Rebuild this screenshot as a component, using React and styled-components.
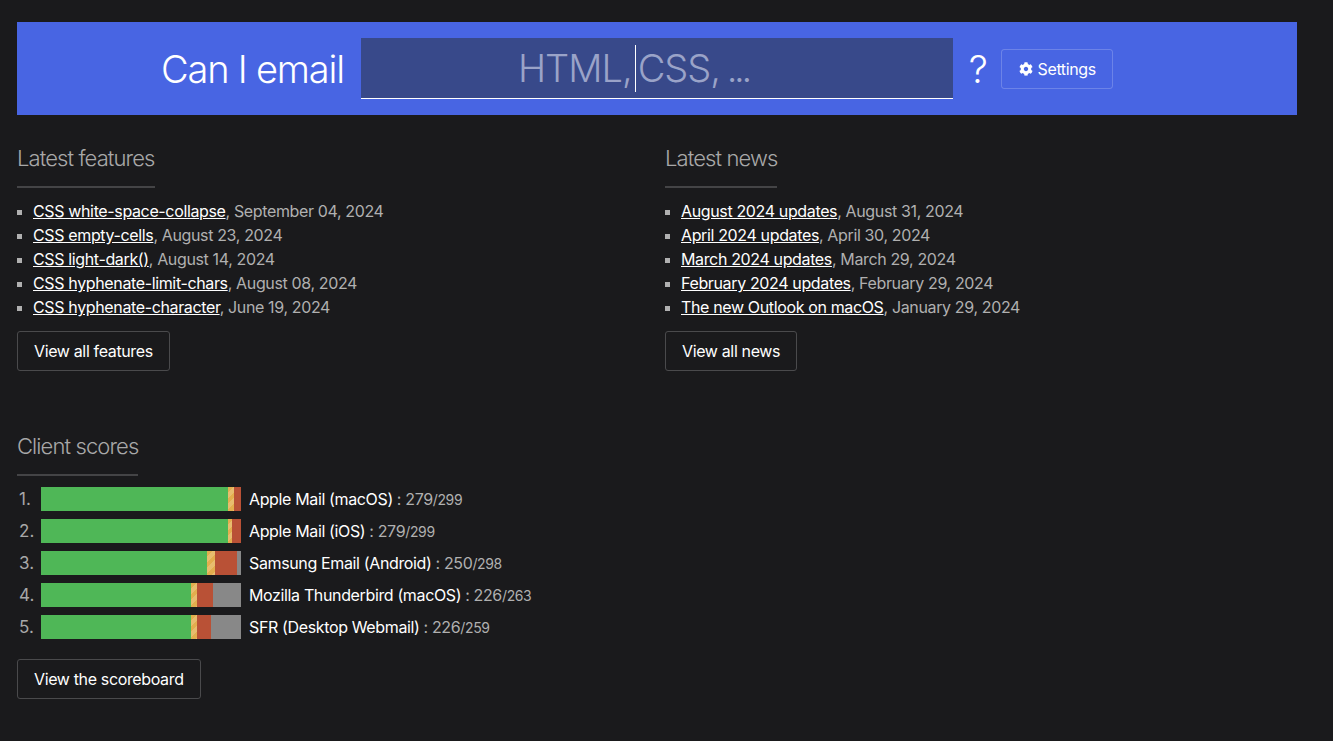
import React from 'react';
import styled, { createGlobalStyle } from 'styled-components';
import { FaCog } from 'react-icons/fa';

const features = [
  ['CSS white-space-collapse', 'September 04, 2024'],
  ['CSS empty-cells', 'August 23, 2024'],
  ['CSS light-dark()', 'August 14, 2024'],
  ['CSS hyphenate-limit-chars', 'August 08, 2024'],
  ['CSS hyphenate-character', 'June 19, 2024'],
];

const news = [
  ['August 2024 updates', 'August 31, 2024'],
  ['April 2024 updates', 'April 30, 2024'],
  ['March 2024 updates', 'March 29, 2024'],
  ['February 2024 updates', 'February 29, 2024'],
  ['The new Outlook on macOS', 'January 29, 2024'],
];

const scores = [
  { name: 'Apple Mail (macOS)', score: 279, total: 299, parts: [187, 6, 7, 0] },
  { name: 'Apple Mail (iOS)', score: 279, total: 299, parts: [187, 4, 9, 0] },
  { name: 'Samsung Email (Android)', score: 250, total: 298, parts: [166, 8, 22, 4] },
  { name: 'Mozilla Thunderbird (macOS)', score: 226, total: 263, parts: [150, 6, 16, 28] },
  { name: 'SFR (Desktop Webmail)', score: 226, total: 259, parts: [150, 6, 14, 30] },
];

const GlobalStyle = createGlobalStyle`
  html, body {
    margin: 0;
    background: #1a1a1c;
  }
  body {
    font-family: Inter, "Liberation Sans", sans-serif;
    font-size: 16px;
    line-height: 24px;
    letter-spacing: -0.36px;
    color: #b0b0b0;
  }
`;

const Page = styled.div`
  width: 1280px;
  padding: 22px 0 42px 17px;
`;

const Header = styled.header`
  display: flex;
  align-items: center;
  height: 93px;
  padding-left: 144px;
  box-sizing: border-box;
  background: #4865e3;
  color: #fff;
`;

const Title = styled.h1`
  margin: 0 17px 0 0;
  font-size: 38px;
  line-height: 46px;
  font-weight: 350;
  letter-spacing: -1.2px;
  white-space: nowrap;
`;

const SearchBox = styled.div`
  display: flex;
  align-items: center;
  justify-content: center;
  width: 592px;
  height: 61px;
  padding-right: 47px;
  box-sizing: border-box;
  background: #38498a;
  border-bottom: 1px solid #fff;
  color: #9aa3c8;
  font-size: 38px;
  font-weight: 300;
  letter-spacing: -1px;
  white-space: nowrap;
`;

const Caret = styled.span`
  width: 1px;
  height: 47px;
  margin: 0 2px 0 3px;
  background: #fff;
`;

const Placeholder = styled.span`
  font-feature-settings: 'calt' 0;
  word-spacing: -3px;
`;

const Dots = styled.span`
  letter-spacing: -3.4px;
`;

const Help = styled.span`
  margin: 0 13px 0 16px;
  font-size: 38px;
  line-height: 46px;
  font-weight: 350;
`;

const Button = styled.a`
  display: inline-flex;
  align-items: center;
  gap: 5px;
  height: 40px;
  padding: 0 16px;
  box-sizing: border-box;
  border: 1px solid #4a4a4c;
  border-radius: 3px;
  color: #fff;
  font-size: 16px;
  white-space: nowrap;
`;

const SettingsButton = styled(Button)`
  padding: 0 16px 0 17px;
  border-color: rgba(255, 255, 255, 0.2);
`;

const Columns = styled.div`
  display: grid;
  grid-template-columns: 632px 632px;
  gap: 16px;
  margin-top: 28px;
`;

const Section = styled.section`
  margin-top: ${(p) => p.$top || 0}px;
`;

const Heading = styled.h2`
  display: table;
  margin: 0 0 11px;
  padding-bottom: 13px;
  border-bottom: 2px solid #444446;
  color: #a8a8a8;
  font-size: 22px;
  line-height: 30px;
  font-weight: 300;
  letter-spacing: -0.9px;
`;

const List = styled.ul`
  margin: 0 0 12px;
  padding-left: 16px;
  list-style: square;

  li::marker {
    font-size: 14px;
  }
`;

const ItemLink = styled.a`
  color: #fff;
  text-decoration: underline;
`;

const ScoreList = styled.ol`
  display: flex;
  flex-direction: column;
  gap: 8px;
  margin: 0 0 20px;
  padding: 0;
  list-style: none;
`;

const ScoreRow = styled.li`
  display: flex;
  align-items: center;
  height: 24px;
`;

const Rank = styled.span`
  width: 24px;
  padding-left: 2px;
  box-sizing: border-box;
  color: #a8a8a8;
  font-size: 17px;
  letter-spacing: 0;
`;

const Bar = styled.div`
  display: flex;
  flex: none;
  width: 200px;
  height: 24px;
  margin-right: 8px;
`;

const segmentColors = ['#4fb757', '#e3ae4e', '#b95136', '#888888'];

const Segment = styled.span`
  height: 100%;
  background-color: ${(p) => segmentColors[p.$kind]};
  ${(p) =>
    p.$kind === 1 &&
    `background-image: repeating-linear-gradient(135deg, transparent 0 4px, rgba(255, 255, 255, 0.18) 4px 8px);`}
`;

const ClientName = styled.span`
  color: #fff;
`;

const Total = styled.small`
  font-size: 14px;
`;

const Score = styled.span`
  margin-left: 4px;
`;

function NewsColumn({ title, items, action }) {
  return (
    <Section>
      <Heading>{title}</Heading>
      <List>
        {items.map(([label, date]) => (
          <li key={label}>
            <ItemLink>{label}</ItemLink>, {date}
          </li>
        ))}
      </List>
      <Button>{action}</Button>
    </Section>
  );
}

export default function App() {
  return (
    <Page>
      <GlobalStyle />
      <Header>
        <Title>Can I email</Title>
        <SearchBox>
          <span>HTML,</span>
          <Caret />
          <Placeholder>
            CSS, <Dots>...</Dots>
          </Placeholder>
        </SearchBox>
        <Help>?</Help>
        <SettingsButton>
          <FaCog size={14} />
          Settings
        </SettingsButton>
      </Header>

      <Columns>
        <NewsColumn title="Latest features" items={features} action="View all features" />
        <NewsColumn title="Latest news" items={news} action="View all news" />
      </Columns>

      <Section $top={60}>
        <Heading>Client scores</Heading>
        <ScoreList>
          {scores.map((client, i) => (
            <ScoreRow key={client.name}>
              <Rank>{i + 1}.</Rank>
              <Bar>
                {client.parts.map((w, kind) => (
                  <Segment key={kind} $kind={kind} style={{ width: w }} />
                ))}
              </Bar>
              <ClientName>{client.name}</ClientName>
              <Score>
                : {client.score}
                <Total>/{client.total}</Total>
              </Score>
            </ScoreRow>
          ))}
        </ScoreList>
        <Button>View the scoreboard</Button>
      </Section>
    </Page>
  );
}
